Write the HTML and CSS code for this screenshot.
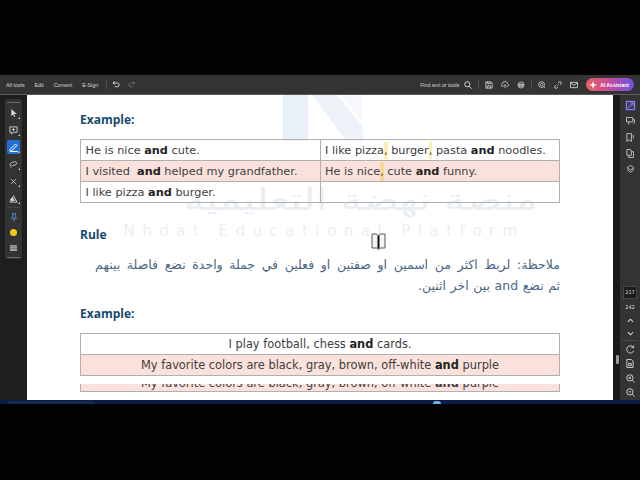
FILE: index.html

```html
<!DOCTYPE html>
<html lang="en">
<head>
  <meta charset="UTF-8" />
  <title>Lesson PDF</title>
  <link rel="stylesheet" href="styles.css">
</head>
<body>
<div class="letterbox-top"></div>

<div class="topbar">
  <div class="menu">
    <span>All tools</span><span>Edit</span><span>Convert</span><span>E-Sign</span>
    <i class="sep"></i>
    <svg width="8" height="7" viewBox="0 0 9 8" fill="none" stroke="#e0e0e0"><path d="M3 .5 1 2.2 3 4M1 2.2h5a2 2 0 0 1 0 4.300H3"/></svg>
    <svg class="redo" width="8" height="7" viewBox="0 0 9 8" fill="none" stroke="#6e6e6e"><path d="M6 .5 8 2.2 6 4M8 2.2H3a2 2 0 0 0 0 4.300h3"/></svg>
  </div>
  <div class="tools">
    <span class="find">Find text or tools</span>
    <svg viewBox="0 0 9 9" fill="none" stroke="#d8d8d8" stroke-width="1.100"><circle cx="3.700" cy="3.700" r="2.900"/><path d="M6 6l2.600 2.600"/></svg>
    <i class="sep"></i>
    <svg viewBox="0 0 9 9" fill="none" stroke="#d0d0d0"><path d="M1 1h5.500L8 2.500V8H1zM3 1v2h3V1M3 8V5.500h3V8"/></svg>
    <svg viewBox="0 0 10 9" fill="none" stroke="#d0d0d0"><path d="M3 6.500H2a1.800 1.800 0 0 1 0-3.500 3 3 0 0 1 6 0 1.800 1.800 0 0 1 0 3.500H7M5 8.500V4M3.500 5.500 5 4l1.500 1.500"/></svg>
    <svg viewBox="0 0 10 9" fill="none" stroke="#d0d0d0"><circle cx="5" cy="4.500" r="3.800"/><path d="M2.500 3.500h5v2.500h-5z" fill="#8a8a8a"/></svg>
    <i class="sep"></i>
    <svg viewBox="0 0 10 10" fill="none" stroke="#d0d0d0"><circle cx="4.500" cy="4.500" r="3.700"/><circle cx="4.500" cy="4.500" r="1.500"/><path d="M7 7l2 2"/></svg>
    <svg viewBox="0 0 9 9" fill="none" stroke="#d0d0d0"><path d="M3.800 5.200 5.200 3.800M4.500 2.200l1-1a1.600 1.600 0 0 1 2.300 2.300l-1 1M4.500 6.800l-1 1a1.600 1.600 0 0 1-2.300-2.300l1-1"/></svg>
    <svg viewBox="0 0 9 8" fill="none" stroke="#d0d0d0"><path d="M.5 1h8v6h-8zM.5 1.500l4 3 4-3"/></svg>
    <span class="ai-btn">
      <svg class="ai-star" viewBox="0 0 8 8" fill="#fff"><path d="M4 0l1 3 3 1-3 1-1 3-1-3-3-1 3-1z"/></svg>
      AI Assistant
    </span>
  </div>
</div>

<div class="workspace">
  <aside class="leftbar">
    <div class="tool-rail">
      <i class="grip"></i>
      <span class="rail-tool"><svg width="8" height="9" viewBox="0 0 9 10" fill="#d8d8d8"><path d="M1.500 0v8l2-2 1.500 3 1-.5L4.500 5.500H7.500z"/></svg></span>
      <span class="rail-tool"><svg width="9" height="9" viewBox="0 0 10 10" fill="none" stroke="#d8d8d8"><path d="M1 1h8v6H5L3 9V7H1zM5 2.500v3M3.500 4h3"/></svg></span>
      <span class="rail-tool"><span class="tool-on"><svg width="10" height="10" viewBox="0 0 10 10" fill="none" stroke="#fff"><path d="M1 7.500 6.500 2l1.500 1.500L2.500 9H1zM1 9.500h8"/></svg></span></span>
      <span class="rail-tool"><svg width="9" height="7" viewBox="0 0 10 8" fill="none" stroke="#d8d8d8"><path d="M2 6C-.5 3 3 1 6 1s3.500 2 2 3-4 .8-5 1.500S2 7.500 2 7.500"/></svg></span>
      <span class="rail-tool"><svg width="7" height="7" viewBox="0 0 9 9" fill="none" stroke="#d8d8d8"><path d="M1 1l7 7M8 1 1 8"/></svg></span>
      <span class="rail-tool"><svg width="10" height="9" viewBox="0 0 11 10" fill="none" stroke="#d8d8d8"><path d="M1 9 5 2l4 7zM2 7h5"/><circle cx="3.500" cy="6" r="1.500" fill="#d8d8d8"/></svg></span>
      <i class="rail-sep"></i>
      <span class="rail-plain"><svg width="6" height="9" viewBox="0 0 7 10" fill="none" stroke="#5f8fe0"><path d="M1.500.500h4M2 .500v4L.500 6h6L5 4.500v-4M3.500 6v3.500"/></svg></span>
      <span class="rail-plain"><i class="dot"></i></span>
      <span class="rail-plain"><svg width="7" height="6" viewBox="0 0 9 7" fill="#c4c4c4"><path d="M0 0h9v1.500H0zM0 2.500h9V4H0zM0 5h9v2H0z"/></svg></span>
      <i class="grip"></i>
    </div>
  </aside>

  <main class="page">
    <div class="watermark">
      <div class="wm-logo">
        <svg width="80" height="46" viewBox="0 0 80 46"><path d="M0 0h25v46H0z" fill="#e9f0f8"/><path d="M29 0h25l26 32V46H63z" fill="#eef3f9"/><path d="M58 0h22v28z" fill="#f7f9fc"/></svg>
      </div>
      <div class="wm-ar" dir="rtl">منصة نهضة التعليمية</div>
      <div class="wm-en">Nhdat Educational Platform</div>
    </div>
    <svg class="ibeam" width="15" height="17" viewBox="0 0 15 17" fill="#f4f4f4" stroke="#555"><path d="M1 1h4.500L7.500 2.500 9.500 1H14v14H9.500L7.500 16.500 5.500 15H1z"/><path d="M7.500 2.500v13" stroke="#111" stroke-width="2"/></svg>

    <h2 class="heading first">Example:</h2>
    <table class="grid two-col">
      <tr>
        <td>He is nice <b>and</b> cute.</td>
        <td>I like pizza<mark class="pale">,</mark> burger<mark class="pale">,</mark> pasta <b>and</b> noodles.</td>
      </tr>
      <tr class="pink">
        <td>I visited &nbsp;<b>and</b> helped my grandfather.</td>
        <td>He is nice<mark>,</mark> cute <b>and</b> funny.</td>
      </tr>
      <tr>
        <td>I like pizza <b>and</b> burger.</td>
        <td></td>
      </tr>
    </table>

    <h2 class="heading rule">Rule</h2>
    <p class="note" dir="rtl"><span class="note-wide">ملاحظة: لربط اكثر من اسمين او صفتين او فعلين في جملة واحدة نضع فاصلة بينهم</span><br>ثم نضع and بين اخر اثنين.</p>

    <h2 class="heading third">Example:</h2>
    <table class="grid centered">
      <tr><td>I play football, chess <b>and</b> cards.</td></tr>
      <tr class="pink"><td>My favorite colors are black, gray, brown, off-white <b>and</b> purple</td></tr>
    </table>
    <div class="cut-row"><span>My favorite colors are black, gray, brown, off-white <b>and</b> purple</span></div>
  </main>

  <div class="gutter"><i class="handle"></i></div>

  <aside class="rightbar">
    <div class="r-upper">
      <span class="r-on"><svg width="9" height="9" viewBox="0 0 9 9" fill="none" stroke="#8f86ea"><path d="M.5.500h8v8h-8zM2 7l5-5M4.500 2H7v2.500"/></svg></span>
      <svg width="9" height="8" viewBox="0 0 10 9" fill="none" stroke="#c8c8c8"><path d="M.500.500h7v5h-7zM3 5.500v3M8 3h1.500v3.500L8 8"/></svg>
      <svg width="9" height="9" viewBox="0 0 10 10" fill="none" stroke="#c8c8c8"><path d="M1 .500h5v9L3.500 7.500 1 9.500zM8 2v4"/></svg>
      <svg width="8" height="9" viewBox="0 0 9 10" fill="none" stroke="#c8c8c8"><path d="M1 .500h4l1 1.500v5H1zM6 3h2.500v6.500H3V7"/></svg>
      <svg width="9" height="8" viewBox="0 0 10 9" fill="none" stroke="#c8c8c8"><path d="M5 .500 9 3 5 5.500 1 3zM1 5l4 3 4-3"/></svg>
    </div>
    <div class="r-lower">
      <span class="pg-now">217</span>
      <span class="pg-all">242</span>
      <svg width="7" height="5" viewBox="0 0 8 5" fill="none" stroke="#d8d8d8" stroke-width="1.200"><path d="M1 4l3-3 3 3"/></svg>
      <svg width="7" height="5" viewBox="0 0 8 5" fill="none" stroke="#d8d8d8" stroke-width="1.200"><path d="M1 1l3 3 3-3"/></svg>
      <i class="r-sep"></i>
      <svg width="9" height="9" viewBox="0 0 10 10" fill="none" stroke="#d8d8d8"><path d="M8.500 6.500A4 4 0 1 1 8 2.500M8.500.500v2.500H6"/></svg>
      <svg width="8" height="9" viewBox="0 0 9 10" fill="none" stroke="#d8d8d8"><path d="M1 .500h5l2 2v7H1zM3 5h3v2.500H3z"/></svg>
      <svg width="9" height="9" viewBox="0 0 10 10" fill="none" stroke="#d8d8d8"><circle cx="4.300" cy="4.300" r="3.500"/><path d="M7 7l2.500 2.500M2.800 4.300h3M4.300 2.800v3"/></svg>
      <svg width="9" height="9" viewBox="0 0 10 10" fill="none" stroke="#d8d8d8"><circle cx="4.300" cy="4.300" r="3.500"/><path d="M7 7l2.500 2.500M2.800 4.300h3"/></svg>
    </div>
  </aside>
</div>

<div class="taskbar"><i class="task-a"></i><i class="task-b"></i></div>
<div class="letterbox-bottom"></div>
</body>
</html>
```

FILE: styles.css

```css
html, body {
  margin: 0;
  padding: 0;
  width: 640px;
  height: 480px;
  overflow: hidden;
  background: #000;
  font-family: "DejaVu Sans", sans-serif;
}
svg { display: block; flex: none; }

.letterbox-top { height: 75px; background: #020202; }
.letterbox-bottom { height: 76px; background: #020202; }

/* top toolbar */
.topbar {
  height: 19px;
  background: #333333;
  border-bottom: 1px solid #5a5a5a;
  display: flex;
  justify-content: space-between;
  align-items: center;
  padding: 0 6px;
  color: #d6d6d6;
  font-family: "Liberation Sans", sans-serif;
  font-size: 5.300px;
}
.menu, .tools { display: flex; align-items: center; }
.menu { gap: 10px; }
.menu .sep { margin: 0 -5px 0 -2px; }
.menu .redo { margin-left: -2px; }
.tools { gap: 8px; }
.tools > svg { width: 8px; height: 8px; }
.find { margin-right: -3px; }
.tools .sep { margin: 0 -2px; }
.sep { width: 1px; height: 8px; background: #555; }
.ai-btn {
  display: flex;
  align-items: center;
  gap: 3px;
  height: 13px;
  padding: 0 5px 0 3px;
  border-radius: 7px;
  background: linear-gradient(90deg, #f0605f, #c84d96 45%, #6a55e0);
  color: #fff;
  font-weight: bold;
  font-size: 5px;
  white-space: nowrap;
}
.ai-star { width: 8px; height: 8px; }

.workspace { height: 305px; display: flex; }

/* left tool rail */
.leftbar {
  width: 27px;
  flex: none;
  background: #1e1e1e;
  padding: 4px 0 0 5px;
  box-sizing: border-box;
}
.tool-rail {
  width: 17px;
  height: 160px;
  background: #333333;
  border-radius: 3px;
  display: grid;
  grid-template-rows: 2.500px repeat(6, 17px) 2.750px repeat(3, 15.500px) 2.250px;
  justify-items: center;
  align-items: center;
  padding-top: 3px;
  box-sizing: border-box;
}
.grip { width: 13px; height: 1px; background: #6a6a6a; align-self: start; }
.tool-rail .grip:last-child { align-self: end; }
.rail-tool, .rail-plain {
  position: relative;
  width: 17px;
  height: 100%;
  display: flex;
  align-items: center;
  justify-content: center;
}
.rail-tool::after {
  content: "";
  position: absolute;
  right: 2px;
  bottom: 3px;
  border: 1px solid transparent;
  border-right-color: #cfcfcf;
  border-bottom-color: #cfcfcf;
}
.tool-on {
  width: 13px;
  height: 14px;
  background: #1f6fd6;
  border-radius: 2px;
  display: flex;
  align-items: center;
  justify-content: center;
}
.rail-sep { width: 13px; height: 1px; background: #474747; align-self: start; }
.dot { width: 7px; height: 7px; border-radius: 50%; background: #f2c81e; }

/* page */
.page {
  flex: 1;
  position: relative;
  background: #fff;
  padding: 0 53px;
  overflow: hidden;
}
.heading {
  position: relative;
  margin: 0;
  color: #17496e;
  font-family: "Open Sans", sans-serif;
  font-size: 12px;
  line-height: 14px;
  font-weight: bold;
}
.first { padding-top: 18px; }
.rule { margin-top: 25px; }
.third { margin-top: 11px; }

.grid {
  position: relative;
  width: 480px;
  border-collapse: collapse;
  table-layout: fixed;
  font-size: 11.300px;
  color: #404040;
}
.grid td {
  height: 20px;
  padding: 0 4.500px;
  border: 1px solid #b0b0b0;
  white-space: nowrap;
}
.grid b { color: #222; }
.two-col { margin-top: 12px; }
.centered { margin-top: 12px; font-size: 11.400px; }
.centered td { text-align: center; }
.pink td { background: #fbe1db; }

mark { background: #fbe9a8; color: inherit; padding: 2px 0; }
.pink mark { background: #f9d596; padding: 3px 0; }
mark.pale { background: #fbeeb4; }

.note {
  position: relative;
  margin: 12px 0 0;
  font-size: 12.500px;
  line-height: 21px;
  color: #4a6685;
  white-space: nowrap;
  word-spacing: 0.600px;
}
.note-wide { word-spacing: 2.650px; }
.cut-row {
  position: relative;
  width: 478px;
  height: 7px;
  margin-top: 8px;
  background: #fbe1db;
  border: 1px solid #b0b0b0;
  border-top: 0;
  font-size: 11.400px;
  line-height: 7px;
  color: #404040;
  text-align: center;
  overflow: hidden;
}
.cut-row span { position: relative; top: -4px; }

/* faint logo behind the page text */
.watermark {
  position: absolute;
  left: 0;
  right: 0;
  top: 0;
  text-align: center;
}
.wm-logo { height: 46px; padding-left: 256px; }
.wm-ar {
  margin: 41px 0 0 82px;
  font-size: 30px;
  line-height: 35px;
  color: #e9eef4;
  transform: scaleX(1.400);
}
.wm-en {
  margin-top: 4px;
  padding-left: 8px;
  font-size: 15px;
  letter-spacing: 7.500px;
  line-height: 20px;
  color: #eeeeee;
  white-space: nowrap;
}
.ibeam { position: absolute; left: 344px; top: 138px; }

/* divider and right panel */
.gutter {
  width: 7px;
  flex: none;
  background: #1a1a1a;
  position: relative;
}
.handle {
  position: absolute;
  left: 3px;
  top: 260px;
  width: 3px;
  height: 9px;
  background: #9a9a9a;
  border-radius: 1px;
}
.rightbar {
  width: 20px;
  flex: none;
  background: #333333;
  display: flex;
  flex-direction: column;
  justify-content: space-between;
  color: #d8d8d8;
}
.r-upper {
  display: grid;
  grid-auto-rows: 16px;
  justify-items: center;
  align-items: center;
  padding-top: 2px;
}
.r-on { display: flex; background: #3c3a66; padding: 1px; }
.r-lower {
  display: grid;
  grid-template-rows: 13px 15px 13px 13px 2px repeat(4, 14.500px);
  justify-items: center;
  align-items: center;
}
.pg-now {
  width: 12px;
  height: 11px;
  background: #1c1c1c;
  border: 1px solid #444;
  font-size: 5px;
  line-height: 11px;
  text-align: center;
}
.pg-all { font-size: 5px; line-height: 8px; }
.r-sep { width: 16px; height: 1px; background: #474747; align-self: start; }

/* strip of the desktop taskbar */
.taskbar {
  height: 4px;
  background: #0c1c4a;
  position: relative;
}
.task-a { position: absolute; left: 8px; top: 1px; width: 86px; height: 3px; background: #152a50; }
.task-b { position: absolute; left: 433px; top: 1px; width: 8px; height: 3px; background: #6fb5e0; border-radius: 4px 4px 0 0; }
```
